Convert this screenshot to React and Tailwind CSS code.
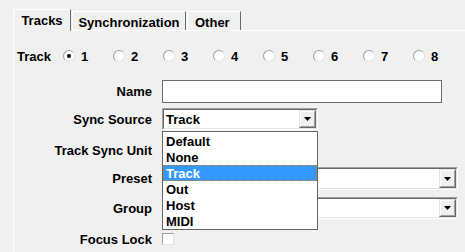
import React from 'react';

const Arrow = () => (
    <svg width="7" height="4" viewBox="0 0 7 4"><path d="M0 0h7L3.5 4z" fill="#000" /></svg>
);

const DropButton = ({ h = 'h-[18px]' }) => (
    <div className={`w-[17px] ${h} bg-[#f0f0f0] border border-t-[#e3e3e3] border-l-[#e3e3e3] border-r-[#696969] border-b-[#696969] flex items-center justify-center`}>
        <div className="w-full h-full border border-t-white border-l-white border-r-[#a0a0a0] border-b-[#a0a0a0] flex items-center justify-center">
            <Arrow />
        </div>
    </div>
);

const Sunken = ({ className, children }) => (
    <div className={`border border-t-[#a0a0a0] border-l-[#a0a0a0] border-r-white border-b-white ${className}`}>
        <div className="w-full h-full border border-t-[#696969] border-l-[#696969] border-r-[#e3e3e3] border-b-[#e3e3e3] bg-white flex items-center justify-between">
            {children}
        </div>
    </div>
);

const Radio = ({ checked }) => (
    <div className="w-[12px] h-[12px] rounded-full border border-t-[#a0a0a0] border-l-[#a0a0a0] border-r-[#e3e3e3] border-b-[#e3e3e3] bg-white flex items-center justify-center">
        {checked && <div className="w-[4px] h-[4px] rounded-full bg-black"></div>}
    </div>
);

const Row = ({ label, className, children }) => (
    <div className={`flex items-center ${className}`}>
        <div className="w-[138px] text-right">{label}</div>
        <div className="ml-[10px] relative flex items-center">{children}</div>
    </div>
);

const items = ['Default', 'None', 'Track', 'Out', 'Host', 'MIDI'];

export default function App() {
    return (
        <div className="w-[465px] h-[252px] bg-[#f0f0f0] overflow-hidden font-['Liberation_Sans',Arial,sans-serif] font-bold text-[13px] leading-[15px] text-black">
            <div className="pl-[13px] pt-[9px]">
                <div className="flex items-end h-[21px]">
                    <div className="relative z-10 w-[58px] h-[22px] -mb-[1px] bg-[#f0f0f0] border-t border-l border-t-white border-l-white border-r border-r-[#696969] flex justify-center pt-[3px]">
                        Tracks
                    </div>
                    <div className="ml-[1px] w-[114px] h-[19px] border-t border-l border-t-white border-l-white border-r border-r-[#696969] flex justify-center pt-[3px]">
                        Synchronization
                    </div>
                    <div className="ml-[1px] w-[54px] h-[19px] border-t border-l border-t-white border-l-white border-r border-r-[#696969] flex pl-[7px] pt-[3px]">
                        Other
                    </div>
                </div>
                <div className="h-[230px] border-t border-l border-white">
                    <div className="flex items-center h-[12px] mt-[19px] pl-[3px]">
                        <div className="w-[46px]">Track</div>
                        {[1, 2, 3, 4, 5, 6, 7, 8].map(n => (
                            <div key={n} className="w-[50px] flex items-center">
                                <Radio checked={n === 1} />
                                <span className="ml-[6px]">{n}</span>
                            </div>
                        ))}
                    </div>

                    <Row label="Name" className="mt-[18px] h-[23px]">
                        <div className="w-[280px] h-[23px] bg-white border border-[#6d6d6d]"></div>
                    </Row>

                    <Row label="Sync Source" className="mt-[5px] h-[22px]">
                        <Sunken className="w-[156px] h-[22px]">
                            <span className="pl-[2px]">Track</span>
                            <DropButton />
                        </Sunken>
                        <div className="absolute left-0 top-[23px] z-20 w-[156px] bg-white border border-[#646464] pt-[1px]">
                            {items.map(item => (
                                <div
                                    key={item}
                                    className={item === 'Track'
                                        ? 'h-[16px] flex items-center pl-[2px] bg-[#3399ff] text-white border border-dotted border-[#c9782f]'
                                        : 'h-[16px] flex items-center pl-[3px]'}
                                >
                                    {item}
                                </div>
                            ))}
                        </div>
                    </Row>

                    <Row label="Track Sync Unit" className="mt-[9px] h-[22px]">
                        <Sunken className="w-[150px] h-[22px]" />
                    </Row>

                    <Row label="Preset" className="mt-[6px] h-[23px]">
                        <Sunken className="w-[296px] h-[23px]">
                            <span></span>
                            <DropButton h="h-[19px]" />
                        </Sunken>
                    </Row>

                    <Row label="Group" className="mt-[7px] h-[22px]">
                        <Sunken className="w-[296px] h-[22px]">
                            <span></span>
                            <DropButton />
                        </Sunken>
                    </Row>

                    <Row label="Focus Lock" className="mt-[14px] h-[12px]">
                        <div className="w-[12px] h-[12px] bg-white border border-t-[#a0a0a0] border-l-[#a0a0a0] border-r-[#e3e3e3] border-b-[#e3e3e3]"></div>
                    </Row>
                </div>
            </div>
        </div>
    );
}
